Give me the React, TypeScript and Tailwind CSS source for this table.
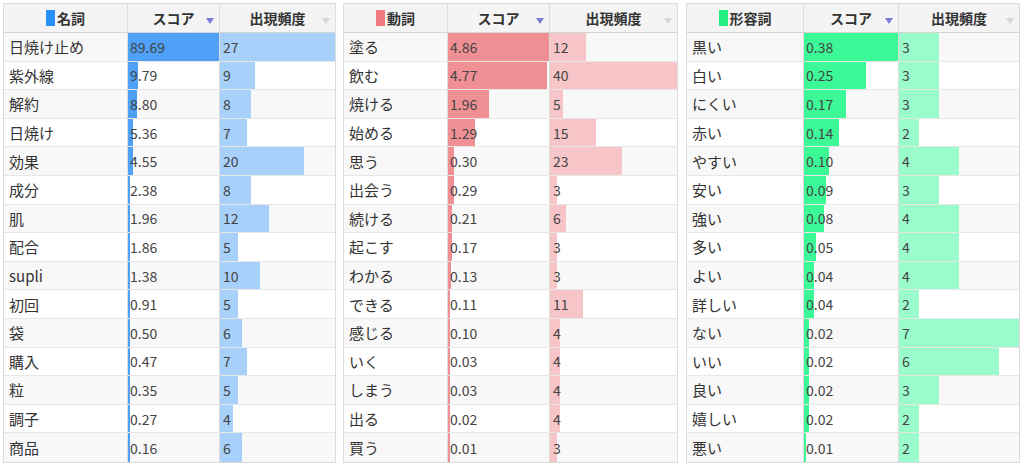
import React from "react";

type Row = [string, number, number];

type TableSpec = {
  title: string;
  square: string;
  scoreBar: string;
  freqBar: string;
  colClass: [string, string, string];
  scoreW: number;
  freqW: number;
  rows: Row[];
  className?: string;
};

const nouns: Row[] = [
  ["日焼け止め", 89.69, 27],
  ["紫外線", 9.79, 9],
  ["解約", 8.8, 8],
  ["日焼け", 5.36, 7],
  ["効果", 4.55, 20],
  ["成分", 2.38, 8],
  ["肌", 1.96, 12],
  ["配合", 1.86, 5],
  ["supli", 1.38, 10],
  ["初回", 0.91, 5],
  ["袋", 0.5, 6],
  ["購入", 0.47, 7],
  ["粒", 0.35, 5],
  ["調子", 0.27, 4],
  ["商品", 0.16, 6],
];

const verbs: Row[] = [
  ["塗る", 4.86, 12],
  ["飲む", 4.77, 40],
  ["焼ける", 1.96, 5],
  ["始める", 1.29, 15],
  ["思う", 0.3, 23],
  ["出会う", 0.29, 3],
  ["続ける", 0.21, 6],
  ["起こす", 0.17, 3],
  ["わかる", 0.13, 3],
  ["できる", 0.11, 11],
  ["感じる", 0.1, 4],
  ["いく", 0.03, 4],
  ["しまう", 0.03, 4],
  ["出る", 0.02, 4],
  ["買う", 0.01, 3],
];

const adjectives: Row[] = [
  ["黒い", 0.38, 3],
  ["白い", 0.25, 3],
  ["にくい", 0.17, 3],
  ["赤い", 0.14, 2],
  ["やすい", 0.1, 4],
  ["安い", 0.09, 3],
  ["強い", 0.08, 4],
  ["多い", 0.05, 4],
  ["よい", 0.04, 4],
  ["詳しい", 0.04, 2],
  ["ない", 0.02, 7],
  ["いい", 0.02, 6],
  ["良い", 0.02, 3],
  ["嬉しい", 0.02, 2],
  ["悪い", 0.01, 2],
];

const tables: TableSpec[] = [
  {
    title: "名詞",
    square: "bg-[#2b8fff]",
    scoreBar: "bg-[#4ea1f6]",
    freqBar: "bg-[#a7d0fb]",
    colClass: ["w-[123px]", "w-[92px]", "w-[116px]"],
    scoreW: 91,
    freqW: 115,
    rows: nouns,
  },
  {
    title: "動詞",
    square: "bg-[#f07a80]",
    scoreBar: "bg-[#f09095]",
    freqBar: "bg-[#f7c5c7]",
    colClass: ["w-[103px]", "w-[102px]", "w-[128px]"],
    scoreW: 101,
    freqW: 127,
    rows: verbs,
    className: "ml-[7px]",
  },
  {
    title: "形容詞",
    square: "bg-[#22ee82]",
    scoreBar: "bg-[#3df896]",
    freqBar: "bg-[#9afcca]",
    colClass: ["w-[116px]", "w-[95px]", "w-[121px]"],
    scoreW: 94,
    freqW: 120,
    rows: adjectives,
    className: "ml-[8px]",
  },
];

function SortArrow({ active }: { active: boolean }) {
  return (
    <svg
      className="absolute right-[5px] top-[14px]"
      width="8"
      height="6"
      viewBox="0 0 8 6"
    >
      <path d="M0 0h8L4 6z" fill={active ? "#7c7cd4" : "#d6d6d6"} />
    </svg>
  );
}

function WordTable({ spec }: { spec: TableSpec }) {
  const [c1, c2, c3] = spec.colClass;
  const maxScore = Math.max(...spec.rows.map((r) => r[1]));
  const maxFreq = Math.max(...spec.rows.map((r) => r[2]));

  return (
    <div
      className={`shrink-0 self-start border border-[#dcdcdc] bg-white ${spec.className ?? ""}`}
    >
      <div className="flex h-[29px] border-b border-[#d4d4d4] bg-[#f4f4f4] text-[14px] font-bold text-[#333]">
        <div className={`flex items-center justify-center gap-[2px] ${c1}`}>
          <span className={`inline-block h-[16px] w-[9px] ${spec.square}`} />
          <span>{spec.title}</span>
        </div>
        <div
          className={`relative flex items-center justify-center border-l border-[#dcdcdc] ${c2}`}
        >
          スコア
          <SortArrow active />
        </div>
        <div
          className={`relative flex items-center justify-center border-l border-[#dcdcdc] ${c3}`}
        >
          出現頻度
          <SortArrow active={false} />
        </div>
      </div>
      {spec.rows.map(([word, score, freq], i) => {
        const sw = Math.max(1.5, (score / maxScore) * spec.scoreW);
        const fw = ((freq - 1) / (maxFreq - 1)) * spec.freqW;
        return (
          <div
            key={word}
            className={`flex h-[28.6px] border-b border-[#e6e6e6] text-[15px] text-[#333] last:border-b-0 ${
              i % 2 === 0 ? "bg-[#f8f8f8]" : "bg-white"
            }`}
          >
            <div className={`flex items-center pl-[5px] ${c1}`}>{word}</div>
            <div
              className={`relative flex items-center border-l border-[#dcdcdc] pl-[2px] text-[14px] text-[#444] ${c2}`}
            >
              <div
                className={`absolute bottom-0 left-0 top-0 ${spec.scoreBar}`}
                style={{ width: sw }}
              />
              <span className="relative">{score.toFixed(2)}</span>
            </div>
            <div
              className={`relative flex items-center border-l border-[#dcdcdc] pl-[3px] text-[14px] text-[#444] ${c3}`}
            >
              <div
                className={`absolute bottom-0 left-0 top-0 ${spec.freqBar}`}
                style={{ width: fw }}
              />
              <span className="relative">{freq}</span>
            </div>
          </div>
        );
      })}
    </div>
  );
}

export default function App() {
  return (
    <div className="flex h-[465px] w-[1024px] bg-white pl-[3px] pt-[3px] font-['Noto_Sans_CJK_JP','Noto_Sans',sans-serif] leading-none">
      {tables.map((t) => (
        <WordTable key={t.title} spec={t} />
      ))}
    </div>
  );
}
